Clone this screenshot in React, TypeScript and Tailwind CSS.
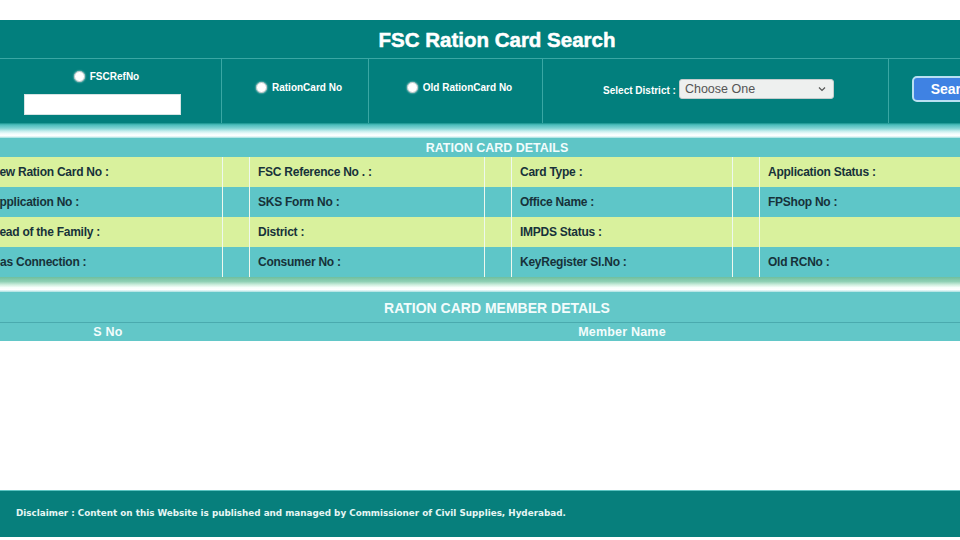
import React from "react";

const Radio = () => (
  <span className="inline-block w-[11px] h-[11px] rounded-full bg-white border border-[#b9c6c6] shadow-[0_0_2px_rgba(255,255,255,0.9)] mr-[5px] shrink-0" />
);

const rows: { bg: string; cells: string[] }[] = [
  { bg: "bg-[#d9f19d]", cells: ["New Ration Card No :", "FSC Reference No . :", "Card Type :", "Application Status :"] },
  { bg: "bg-[#5ec6c8]", cells: ["Application No :", "SKS Form No :", "Office Name :", "FPShop No :"] },
  { bg: "bg-[#d9f19d]", cells: ["Head of the Family :", "District :", "IMPDS Status :", ""] },
  { bg: "bg-[#5ec6c8]", cells: ["Gas Connection :", "Consumer No :", "KeyRegister Sl.No :", "Old RCNo :"] },
];

export default function App() {
  return (
    <div className="w-[960px] h-[540px] overflow-hidden bg-white font-['Liberation_Sans',Arial,sans-serif]">
      <div className="w-[1028px] -ml-[17px]">
        <div className="h-[20px]" />
        {/* Title bar */}
        <div className="h-[38px] bg-[#027f7d] flex items-center justify-center text-white font-bold text-[20.5px] pt-[2px] [-webkit-text-stroke:0.5px_white]">
          FSC Ration Card Search
        </div>
        {/* Search row */}
        <div className="h-[65px] bg-[#027f7d] border-t border-[#3aa7a4] flex text-white font-bold text-[10px]">
          <div className="w-[239px] border-r border-[#3aa7a4] flex flex-col items-center pt-[11px] pl-[1px]">
            <div className="flex items-center h-[13px] ml-[8px]">
              <Radio />
              <span>FSCRefNo</span>
            </div>
            <div className="mt-[11px] w-[157px] h-[21px] bg-white border border-[#d6e4e4]" />
          </div>
          <div className="w-[147px] border-r border-[#3aa7a4] flex items-center justify-center pb-[8px] pl-[8px]">
            <Radio />
            <span>RationCard No</span>
          </div>
          <div className="w-[174px] border-r border-[#3aa7a4] flex items-center justify-center pb-[8px] pl-[8px]">
            <Radio />
            <span>Old RationCard No</span>
          </div>
          <div className="w-[346px] border-r border-[#3aa7a4] flex items-center justify-center pb-[4px] pl-[6px]">
            <span className="mr-[3px] mt-[2px]">Select District :</span>
            <div className="w-[155px] h-[20px] bg-[#eef0ef] border border-[#c4cccc] rounded-[3px] flex items-center justify-between pl-[5px] pr-[7px] text-[#555] font-normal text-[12.5px]">
              <span>Choose One</span>
              <svg width="8" height="6" viewBox="0 0 8 6" fill="none">
                <path d="M1 1.5 L4 4.5 L7 1.5" stroke="#555" strokeWidth="1.2" />
              </svg>
            </div>
          </div>
          <div className="flex-1 flex items-center pl-[23px] pb-[4px]">
            <div className="w-[84px] h-[26px] bg-[#3f82e3] border-2 border-[#b9e0f2] rounded-[5px] flex items-center justify-center text-white font-bold text-[14px]">
              Search
            </div>
          </div>
        </div>
        {/* gradient band */}
        <div className="h-[15px] bg-[linear-gradient(to_bottom,#138f8b_0%,#4cbdbc_12%,#7fd3d3_35%,#c8eeee_55%,#f2fdfd_72%,#ffffff_86%,#9ddede_100%)]" />
        {/* Details header */}
        <div className="h-[19px] bg-[#5ec5c6] flex items-center justify-center text-[#f2fcfc] font-bold text-[12.5px] pt-[1px]">
          RATION CARD DETAILS
        </div>
        {/* Details rows */}
        <div>
          {rows.map((r, i) => (
            <div
              key={i}
              className={`grid grid-cols-[240px_27px_235px_27px_221px_27px_251px] h-[30px] ${r.bg} text-[#17323a] font-bold text-[12px] tracking-[-0.25px]`}
            >
              <div className="flex items-center pl-[8px] border-r border-[#eef8ee]">{r.cells[0]}</div>
              <div className="border-r border-[#eef8ee]" />
              <div className="flex items-center pl-[8px] border-r border-[#eef8ee]">{r.cells[1]}</div>
              <div className="border-r border-[#eef8ee]" />
              <div className="flex items-center pl-[8px] border-r border-[#eef8ee]">{r.cells[2]}</div>
              <div className="border-r border-[#eef8ee]" />
              <div className="flex items-center pl-[8px]">{r.cells[3]}</div>
            </div>
          ))}
        </div>
        {/* gradient band 2 */}
        <div className="h-[15px] bg-[linear-gradient(to_bottom,#6fbf9e_0%,#8fd0b4_30%,#cdeedd_52%,#f7fffb_70%,#ffffff_84%,#a6e0e0_100%)]" />
        {/* Member header */}
        <div className="h-[31px] bg-[#62c7c8] flex items-center justify-center text-[#f2fcfc] font-bold text-[14px] pt-[2px] border-b border-[#4aaaae]">
          RATION CARD MEMBER DETAILS
        </div>
        <div className="h-[18px] bg-[#62c7c8] flex text-[#f2fcfc] font-bold text-[12.5px] tracking-[0.2px]">
          <div className="w-[250px] flex items-center justify-center">S No</div>
          <div className="flex-1 flex items-center justify-center">Member Name</div>
        </div>
      </div>
      <div className="h-[149px]" />
      {/* Footer */}
      <div className="h-[47px] bg-[#077f7c] border-t border-[#5cc4c2] flex items-center pl-[16px] text-[#e6f6f4] font-bold text-[8.8px] font-['DejaVu_Sans',sans-serif]">
        Disclaimer : Content on this Website is published and managed by Commissioner of Civil Supplies, Hyderabad.
      </div>
    </div>
  );
}
